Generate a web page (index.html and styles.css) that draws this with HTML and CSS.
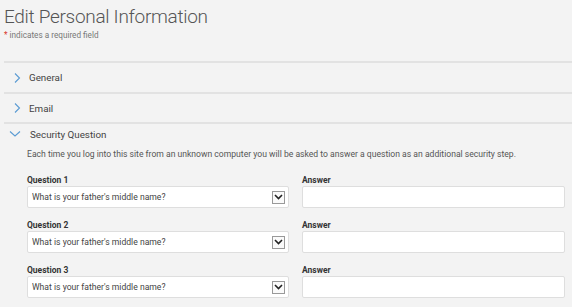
FILE: index.html
```html
<!DOCTYPE html>
<html lang="en">
<head>
	<meta charset="UTF-8">
	<title>Edit Personal Information</title>
	<link rel="stylesheet" href="styles.css">
</head>
<body>
	<div class="page">
		<h1 class="title">Edit Personal Information</h1>
		<p class="required"><i>*</i> indicates a required field</p>

		<div class="section first">
			<div class="head">
				<svg class="chev" width="10" height="12" viewBox="0 0 10 12"><path d="M3 1.5 L7.5 6 L3 10.5" fill="none" stroke="#5a9bd3" stroke-width="1.1"/></svg>
				<span>General</span>
			</div>
		</div>

		<div class="section">
			<div class="head">
				<svg class="chev" width="10" height="12" viewBox="0 0 10 12"><path d="M3 1.5 L7.5 6 L3 10.5" fill="none" stroke="#5a9bd3" stroke-width="1.1"/></svg>
				<span>Email</span>
			</div>
		</div>

		<div class="section open">
			<div class="head">
				<svg class="chev down" width="12" height="10" viewBox="0 0 12 10"><path d="M1 2.5 L6 7 L11 2.5" fill="none" stroke="#5a9bd3" stroke-width="1.1"/></svg>
				<span>Security Question</span>
			</div>
			<div class="body">
				<p class="desc">Each time you log into this site from an unknown computer you will be asked to answer a question as an additional security step.</p>

				<div class="grid">
					<div class="field">
						<label for="q1">Question 1</label>
						<div class="select">
							<select id="q1"><option>What is your father's middle name?</option></select>
							<span class="arrow"><svg width="9" height="6" viewBox="0 0 9 6"><path d="M1 1 L4.5 4.5 L8 1" fill="none" stroke="#222" stroke-width="1.6"/></svg></span>
						</div>
					</div>
					<div class="field">
						<label for="a1">Answer</label>
						<input type="text" id="a1">
					</div>

					<div class="field">
						<label for="q2">Question 2</label>
						<div class="select">
							<select id="q2"><option>What is your father's middle name?</option></select>
							<span class="arrow"><svg width="9" height="6" viewBox="0 0 9 6"><path d="M1 1 L4.5 4.5 L8 1" fill="none" stroke="#222" stroke-width="1.6"/></svg></span>
						</div>
					</div>
					<div class="field">
						<label for="a2">Answer</label>
						<input type="text" id="a2">
					</div>

					<div class="field">
						<label for="q3">Question 3</label>
						<div class="select">
							<select id="q3"><option>What is your father's middle name?</option></select>
							<span class="arrow"><svg width="9" height="6" viewBox="0 0 9 6"><path d="M1 1 L4.5 4.5 L8 1" fill="none" stroke="#222" stroke-width="1.6"/></svg></span>
						</div>
					</div>
					<div class="field">
						<label for="a3">Answer</label>
						<input type="text" id="a3">
					</div>
				</div>
			</div>
		</div>
	</div>
</body>
</html>
```

FILE: styles.css
```css
html, body {
	margin: 0;
	background: #f3f3f3;
}
.page {
	font-family: Roboto, "Liberation Sans", sans-serif;
	color: #555;
	padding: 5px 0 0 4px;
}
.title {/*大标题*/
	margin: 0;
	font-size: 19px;
	font-weight: 300;
	letter-spacing: -0.3px;
	line-height: 24px;
	color: #555;
}
.required {
	margin: 1px 0 0 0;
	font-size: 8.2px;
	line-height: 10px;
	color: #777;
}
.required i {
	font-style: normal;
	color: #d9342b;
}
.section {/*每一个折叠栏*/
	border-top: 2px solid #e2e2e2;
}
.section.first {
	margin-top: 21px;
}
.head {
	display: flex;
	align-items: center;
	height: 28px;
	font-size: 9.8px;
	color: #444;
}
.first .head {
	height: 29px;
}
.open .head {/*展开的那一栏*/
	height: 20px;
}
.chev {
	margin: 0 7px 0 8px;
}
.chev.down {
	margin: 0 9px 0 5px;
}
.body {
	padding: 4px 7px 0 23px;
}
.desc {
	margin: 0;
	font-size: 8.6px;
	line-height: 12px;
	color: #555;
}
.grid {/*问题和答案两列*/
	display: grid;
	grid-template-columns: 262px 1fr;
	column-gap: 13px;
	row-gap: 11px;
	margin-top: 14px;
}
.field label {
	display: block;
	font-size: 8.5px;
	font-weight: bold;
	line-height: 12px;
	color: #333;
}
.select, .field input {
	box-sizing: border-box;
	height: 22px;
	border: 1px solid #dedede;
	border-radius: 2px;
	background: #fff;
}
.select {
	display: flex;
	align-items: center;
	padding-right: 3px;
}
.select select {
	flex: 1;
	appearance: none;
	border: none;
	background: transparent;
	font-family: Roboto, "Liberation Sans", sans-serif;
	font-size: 8.6px;
	color: #444;
	padding: 0 0 0 4px;
	outline: none;
}
.arrow {/*下拉箭头的小方框*/
	display: flex;
	align-items: center;
	justify-content: center;
	width: 11px;
	height: 11px;
	border: 1px solid #999;
	background: #fafafa;
}
.field input {
	display: block;
	width: 100%;
	padding: 0 4px;
}
```
